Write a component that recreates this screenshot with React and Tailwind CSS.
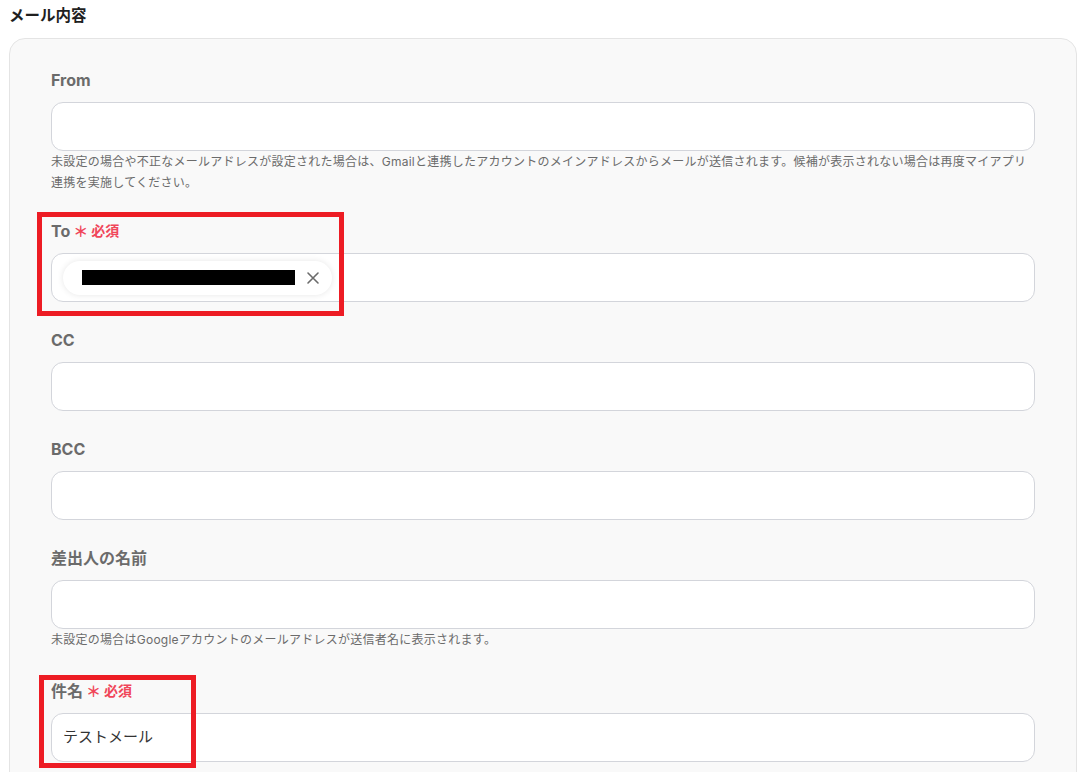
import React from "react";

const FONT = { fontFamily: '"Inter", "Noto Sans CJK JP", sans-serif' };

function Label({ children, required }) {
  return (
    <div className="flex items-center h-[20px] mb-[12px]">
      <span className="text-[16px] font-bold leading-[20px] text-[#6b6b6b]">{children}</span>
      {required && (
        <span className="flex items-center ml-[3px] text-[#f04659] font-bold">
          <span className="text-[15px] leading-[20px] translate-y-[1px]">＊</span>
          <span className="text-[14px] leading-[20px] ml-[3px]">必須</span>
        </span>
      )}
    </div>
  );
}

function Input({ children }) {
  return (
    <div className="h-[49px] rounded-[12px] border border-[#d3d5db] bg-white flex items-center px-[11px]">
      {children}
    </div>
  );
}

function Help({ children }) {
  return <p className="text-[12px] leading-[21px] tracking-[0.25px] text-[#6b6b6b] mt-0">{children}</p>;
}

export default function App() {
  return (
    <div className="relative bg-white min-h-[772px] pl-[9px] pr-[11px] pt-[5px]" style={FONT}>
      <h2 className="text-[15.5px] font-bold leading-[22px] text-[#1f1f1f] mb-[11px]">メール内容</h2>
      <div className="rounded-[16px] border border-[#e4e4e4] bg-[#f9f9f9] pt-[31px] px-[41px] pb-[40px] flex flex-col gap-[28px]">
        <div>
          <Label>From</Label>
          <Input />
          <Help>
            未設定の場合や不正なメールアドレスが設定された場合は、Gmailと連携したアカウントのメインアドレスからメールが送信されます。候補が表示されない場合は再度マイアプリ
            <br />
            連携を実施してください。
          </Help>
        </div>
        <div>
          <Label required>To</Label>
          <Input>
            <div className="flex items-center h-[34px] rounded-full bg-white pl-[19px] pr-[12px] shadow-[0_0_6px_rgba(0,0,0,0.10)]">
              <div className="w-[213px] h-[15px] bg-black" />
              <svg className="ml-[11px]" width="14" height="14" viewBox="0 0 14 14" fill="none" stroke="#6b6b6b" strokeWidth="1.6" strokeLinecap="round">
                <path d="M2 2 L12 12 M12 2 L2 12" />
              </svg>
            </div>
          </Input>
        </div>
        <div>
          <Label>CC</Label>
          <Input />
        </div>
        <div>
          <Label>BCC</Label>
          <Input />
        </div>
        <div className="pb-[3px]">
          <Label>差出人の名前</Label>
          <Input />
          <Help>未設定の場合はGoogleアカウントのメールアドレスが送信者名に表示されます。</Help>
        </div>
        <div>
          <Label required>件名</Label>
          <Input>
            <span className="text-[15px] text-[#333333]">テストメール</span>
          </Input>
        </div>
      </div>
      <div className="absolute left-[37px] top-[212px] w-[307px] h-[104px] border-[5px] border-[#ed1c24] pointer-events-none" />
      <div className="absolute left-[39px] top-[675px] w-[157px] h-[93px] border-[5px] border-[#ed1c24] pointer-events-none" />
    </div>
  );
}
